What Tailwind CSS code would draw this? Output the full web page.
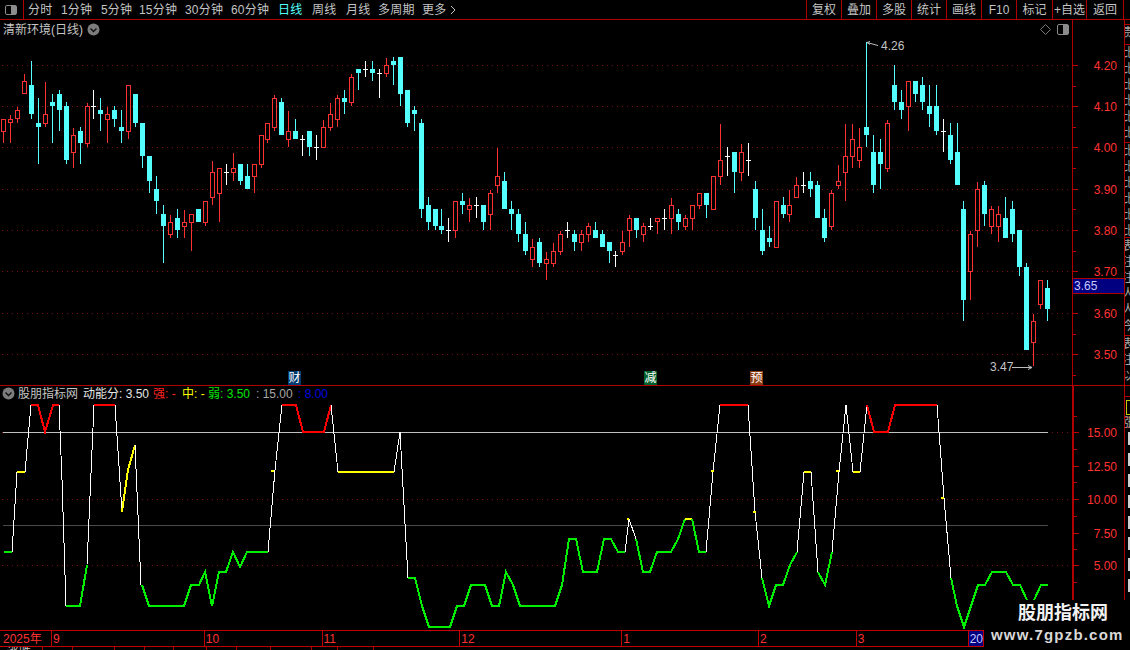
<!DOCTYPE html>
<html lang="zh-CN" class="bg-black">
  <head>
    <meta charset="UTF-8" />
    <title>清新环境 日线</title>
    <script src="https://cdn.jsdelivr.net/npm/@tailwindcss/browser@4"></script>
  </head>
  <body class="bg-black">
    <div class="relative flex flex-col w-[1130px] h-[650px] overflow-hidden bg-black text-[12px] leading-none text-[#c4c4c4] font-['Liberation_Sans','Noto_Sans_CJK_SC',sans-serif]">
      <!-- top toolbar -->
      <header class="flex h-[20px] shrink-0 border-b border-[#b00000]">
        <button class="flex items-center justify-center w-[24px] border-r border-[#b00000]">
          <span class="flex justify-end w-[12px] h-[10px] border border-[#8c8c8c] rounded-[2px] ml-[-1px]"><span class="w-[5px] bg-[#8c8c8c]"></span></span>
        </button>
        <nav class="flex items-center flex-1 pl-[4px] tracking-[0.2px]">
          <span class="w-[33px]">分时</span>
          <span class="w-[40px]">1分钟</span>
          <span class="w-[38px]">5分钟</span>
          <span class="w-[46px]">15分钟</span>
          <span class="w-[46px]">30分钟</span>
          <span class="w-[47px]">60分钟</span>
          <span class="w-[34px] text-[#54ffff]">日线</span>
          <span class="w-[34px]">周线</span>
          <span class="w-[32px]">月线</span>
          <span class="w-[44px]">多周期</span>
          <span class="flex items-center gap-[4px]">更多<svg width="6" height="10" viewBox="0 0 6 10"><path d="M1 1l4 4-4 4" fill="none" stroke="#c4c4c4"/></svg></span>
        </nav>
        <div class="flex items-stretch">
          <span class="flex items-center justify-center w-[35px] border-l border-[#b00000]">复权</span>
          <span class="flex items-center justify-center w-[35px] border-l border-[#b00000]">叠加</span>
          <span class="flex items-center justify-center w-[35px] border-l border-[#b00000]">多股</span>
          <span class="flex items-center justify-center w-[35px] border-l border-[#b00000]">统计</span>
          <span class="flex items-center justify-center w-[35px] border-l border-[#b00000]">画线</span>
          <span class="flex items-center justify-center w-[35px] border-l border-[#b00000]">F10</span>
          <span class="flex items-center justify-center w-[36px] border-l border-[#b00000]">标记</span>
          <span class="flex items-center justify-center w-[34px] border-l border-[#b00000]">+自选</span>
          <span class="flex items-center justify-center w-[37px] border-l border-[#b00000]">返回</span>
          <span class="w-[7px] border-l border-[#b00000]"></span>
        </div>
      </header>

      <!-- price panel -->
      <section class="flex h-[366px] shrink-0 border-b border-[#b00000]">
        <div class="relative w-[1072px]">
          <svg id="price" class="absolute inset-0" width="1072" height="365" viewBox="0 20 1072 365"></svg>
          <div class="relative flex items-center h-[19px] pl-[3px] gap-[4px]">
            <span>清新环境(日线)</span>
            <svg width="13" height="13" viewBox="0 0 13 13"><circle cx="6.5" cy="6.5" r="6" fill="#7d7d7d"/><path d="M3.5 5.5l3 3 3-3" fill="none" stroke="#111" stroke-width="1.4"/></svg>
            <span class="flex items-center gap-[6px] ml-auto mr-[3px]">
              <svg width="11" height="11" viewBox="0 0 11 11"><path d="M5.5.5l5 5-5 5-5-5z" fill="none" stroke="#777"/></svg>
              <span class="flex justify-end w-[12px] h-[11px] border border-[#8c8c8c] rounded-[2px]"><span class="w-[5px] bg-[#8c8c8c]"></span></span>
            </span>
          </div>
          <span class="absolute left-[881px] top-[20px] text-[#c4c4c4]">4.26</span>
          <span class="absolute left-[990px] top-[341px] text-[#c4c4c4]">3.47</span>
          <span class="absolute left-[288px] top-[351px] w-[13px] h-[14px] flex items-center justify-center bg-[#003a6e] text-white">财</span>
          <span class="absolute left-[644px] top-[351px] w-[13px] h-[14px] flex items-center justify-center bg-[#00602a] text-white">减</span>
          <span class="absolute left-[750px] top-[351px] w-[13px] h-[14px] flex items-center justify-center bg-[#8a3a10] text-white">预</span>
        </div>
        <div class="relative w-[52px] border-l border-[#b00000]">
          <svg id="price-axis" class="absolute inset-0" width="51" height="365" viewBox="1073 20 51 365"></svg>
          <div class="absolute left-0 right-0 top-[258px] h-[16px] flex items-center pl-[1px] bg-[#000080] border-y border-[#b00000] text-[#c8c8ff]">3.65</div>
        </div>
        <div class="flex flex-col w-[6px] border-l border-[#b00000] overflow-hidden leading-[16px] text-[#a8a8a8]">
          <div class="h-[5px] border-b border-[#b00000]"></div>
          <div class="h-[20px] border-b border-[#b00000] ml-[-3px] w-[12px]">责</div>
          <div class="h-[98px] border-b border-[#b00000] ml-[-3px] w-[12px]">比<br>比<br>比<br>比<br>比<br>比</div>
          <div class="h-[95px] border-b border-[#b00000] ml-[-3px] w-[12px]">比<br>比<br>比<br>比<br>比<br>比</div>
          <div class="h-[98px] border-b border-[#b00000] ml-[-3px] w-[12px]">表<br>注<br>注<br>人<br>人<br>今</div>
          <div class="h-[49px] ml-[-3px] w-[12px]">表<br>注<br>以</div>
        </div>
      </section>

      <!-- indicator panel -->
      <section class="flex h-[244px] shrink-0">
        <div class="relative w-[1072px]">
          <svg id="ind" class="absolute inset-0" width="1072" height="244" viewBox="0 386 1072 244"></svg>
          <div class="relative flex items-center h-[15px] pl-[2px] gap-[3px] whitespace-nowrap">
            <svg width="13" height="13" viewBox="0 0 13 13"><circle cx="6.5" cy="6.5" r="6" fill="#7d7d7d"/><path d="M3.5 5.5l3 3 3-3" fill="none" stroke="#111" stroke-width="1.4"/></svg>
            <span class="w-[62px]">股朋指标网</span>
            <span class="w-[67px] text-[#e6e6e6]">动能分: 3.50</span>
            <span class="w-[26px] text-[#ff2020]">强: -</span>
            <span class="w-[23px] text-[#ffff00]">中: -</span>
            <span class="w-[45px] text-[#00e600]">弱: 3.50</span>
            <span class="w-[39px] text-[#a8a8a8]">: 15.00</span>
            <span class="text-[#0000e0]">: 8.00</span>
          </div>
        </div>
        <div class="relative w-[52px] border-l-2 border-[#b00000]">
          <svg id="ind-axis" class="absolute inset-0" width="50" height="244" viewBox="1074 386 50 244"></svg>
        </div>
        <div class="flex flex-col w-[6px] border-l border-[#b00000] overflow-hidden leading-[10px] text-[#a8a8a8]">
          <div class="h-[11px] border-b border-[#b00000]"></div>
          <div class="h-[21px] border-b border-[#b00000] pl-[1px]">
            <span class="block w-[8px] h-[15px] mt-[3px] border border-[#c8c800]"></span>
          </div>
          <div class="h-[10px] border-b border-[#b00000] ml-[-3px] w-[12px]">涨</div>
          <div class="flex flex-col gap-[8px] pt-[4px] pl-[3px]">
            <span class="w-[3px] h-[13px] shrink-0 bg-[#cfcfcf]"></span>
            <span class="w-[3px] h-[13px] shrink-0 bg-[#cfcfcf]"></span>
            <span class="w-[3px] h-[13px] shrink-0 bg-[#cfcfcf]"></span>
            <span class="w-[3px] h-[13px] shrink-0 bg-[#cfcfcf]"></span>
            <span class="w-[3px] h-[13px] shrink-0 bg-[#cfcfcf]"></span>
            <span class="w-[3px] h-[13px] shrink-0 bg-[#cfcfcf]"></span>
            <span class="w-[3px] h-[13px] shrink-0 bg-[#cfcfcf]"></span>
            <span class="w-[3px] h-[13px] shrink-0 bg-[#cfcfcf]"></span>
          </div>
        </div>
      </section>

      <!-- time axis -->
      <footer class="relative flex h-[17px] shrink-0 w-[984px] border-y border-[#c00000] text-[#ff3232]">
        <span class="flex items-center w-[51px] pl-[3px]">2025年</span>
        <span class="flex items-center w-[153px] pl-[1px] border-l border-[#c00000]">9</span>
        <span class="flex items-center w-[118px] pl-[1px] border-l border-[#c00000]">10</span>
        <span class="flex items-center w-[138px] pl-[1px] border-l border-[#c00000]">11</span>
        <span class="flex items-center w-[162px] pl-[1px] border-l border-[#c00000]">12</span>
        <span class="flex items-center w-[137px] pl-[1px] border-l border-[#c00000]">1</span>
        <span class="flex items-center w-[98px] pl-[1px] border-l border-[#c00000]">2</span>
        <span class="flex items-center w-[112px] pl-[1px] border-l border-[#c00000]">3</span>
        <span class="flex items-center flex-1 pl-[1px] border-x border-[#c00000] bg-[#000080] text-[#c8c8ff]">20</span>
      </footer>
      <div class="flex h-[3px] w-[984px] text-[#c4c4c4]">
        <span class="w-[43px] pl-[7px] border-r border-[#b00000]">涨跌</span>
        <span class="w-[30px] border-r border-[#b00000]"></span>
        <span class="w-[42px] border-r border-[#b00000]"></span>
        <span class="w-[30px] border-r border-[#b00000]"></span>
        <span class="w-[29px] border-r border-[#b00000]"></span>
        <span class="w-[33px] border-r border-[#b00000]"></span>
        <span class="w-[30px] border-r border-[#b00000]"></span>
        <span class="w-[34px] border-r border-[#b00000]"></span>
        <span class="w-[41px] border-r border-[#b00000]"></span>
        <span class="w-[26px] border-r border-[#b00000]"></span>
        <span class="w-[36px] border-r border-[#b00000]"></span>
      </div>

      <!-- watermark, lies over the chart corner -->
      <div class="absolute right-0 top-[600px] w-[115px] h-[25px] flex items-center pl-[3px] bg-black">
        <span class="text-[18px] font-bold text-[#f2f2f2]">股朋指标网</span>
      </div>
      <div class="absolute right-0 top-[625px] w-[146px] h-[25px] flex items-start pl-[7px] pt-[2px] bg-black">
        <span class="text-[15px] font-bold text-[#d8d8d8] tracking-[1.2px] font-['Liberation_Sans',sans-serif]">www.7gpzb.com</span>
      </div>
    </div>

    <script>
      const NS = "http://www.w3.org/2000/svg";
      const RED = "#ff3232";
      const CYAN = "#54ffff";
      const GRID = "#7a0f0f";

      function add(svg, tag, attrs, text) {
        const el = document.createElementNS(NS, tag);
        for (const k in attrs) el.setAttribute(k, attrs[k]);
        if (text) el.textContent = text;
        svg.appendChild(el);
        return el;
      }

      function hdots(svg, y, x1, x2) {
        add(svg, "line", { x1, y1: y + 0.5, x2, y2: y + 0.5, stroke: GRID, "stroke-dasharray": "1 4" });
      }

      // type, high, body top, body bottom, low, read off the chart per block
      const blocks = [
        { y0: 50, rows: [
          ["r",208,208,245,278],["r",196,208,220,278],["r",170,181,208,218],["r",72,94,133,133],["c",33,105,191,207],
          ["c",144,219,231,342],["r",96,193,221,231],["c",132,156,167,278],["c",120,132,179,242],["c",156,168,330,342],
          ["r",235,256,308,353],["c",232,243,278,342],["r",160,168,281,290],["w",120,169,169,207],["c",144,180,192,242],
          ["r",170,193,209,278],["c",168,180,207,230],["c",180,231,243,278],["r",106,106,245,267],["c",132,132,218,230],
          ["c",219,219,318,353],["c",318,318,392,428],["c",378,417,452,492],["c",465,492,527,638],["r",495,517,554,564],
          ["c",477,504,540,564],["r",480,517,530,564],["r",492,493,518,602],["c",477,477,516,516],["r",454,454,518,528],
          ["r",333,367,443,465],["r",355,355,431,515],
          ["w",342,367,367,405],["r",309,355,369,393],["c",342,342,392,405],["c",342,378,417,417],["r",343,343,380,429],
          ["r",256,256,344,354],["r",220,220,269,279],["r",135,145,233,243],["c",144,156,255,255],["r",183,244,269,291],
          ["c",207,243,267,267],["w",255,268,268,318],["c",243,243,291,318],["w",255,292,292,330],["r",209,232,293,293],
          ["r",159,193,233,243],["r",135,145,209,231],["c",120,144,156,192],["r",72,82,158,168],["c",57,57,69,120],
          ["w",33,58,58,81],["c",33,57,69,93],["w",57,70,70,144],["r",24,46,71,81],["c",21,33,45,105],["c",21,21,132,168],
          ["c",120,120,219,231],["c",168,180,192,243],["c",207,219,477,504],["c",441,465,516,540],["c",477,477,528,540],
        ]},
        { y0: 120, rows: [
          ["c",267,318,330,342],["w",294,330,330,366],["r",243,243,332,354],["c",219,243,255,282],["r",234,256,269,306],
          ["w",231,256,256,294],["c",255,255,306,330],["r",210,220,285,330],["r",84,169,197,219],["c",156,183,267,267],
          ["c",243,267,282,330],["c",267,282,342,366],["c",306,342,392,405],["r",358,381,419,441],["c",354,366,429,441],
          ["r",396,418,431,480],["r",369,394,431,441],["r",333,343,395,405],["w",306,331,331,354],["c",330,342,366,393],
          ["r",330,343,368,393],["r",309,319,344,366],["c",306,330,354,354],["c",330,342,381,381],["c",366,366,393,429],
          ["w",393,406,406,441],["r",333,367,395,405],["r",285,295,332,381],["c",294,294,330,354],["r",309,319,344,366],
          ["w",294,319,319,330],["r",295,295,307,342],
        ]},
        { y0: 110, rows: [
          ["w",297,325,325,360],["r",264,286,326,372],["c",297,312,336,360],["r",315,325,350,360],["r",286,286,326,360],
          ["r",250,250,287,297],["c",249,249,285,324],["r",198,198,299,299],["r",42,151,200,225],["w",111,139,139,198],
          ["c",126,126,186,249],["r",102,127,188,213],["w",99,151,151,198],["c",213,237,324,360],["c",297,360,423,435],
          ["c",348,384,396,411],["r",274,274,413,413],["c",261,285,312,324],["r",240,286,314,336],["r",201,226,263,263],
          ["w",186,226,226,249],["c",186,213,237,261],["c",213,225,324,324],["c",297,324,384,396],["r",240,250,350,360],
          ["r",165,214,228,237],["r",42,139,188,273],["r",42,88,140,174],["r",54,112,152,174],
        ]},
        { y0: 40, rows: [
          ["c",6,261,285,321],["c",285,336,435,459],["c",297,336,372,447],["r",240,250,386,396],["c",75,135,186,210],
          ["c",150,186,210,237],["r",124,124,200,273],["c",123,123,162,186],["c",111,135,186,210],["c",135,198,222,261],
          ["c",135,198,273,285],["w",237,274,274,336],["c",249,285,360,372],["c",249,336,435,435],["c",484,507,780,843],
          ["r",573,583,695,780],["r",426,448,572,621],["c",423,435,522,558],["r",498,508,560,582],["r",498,523,560,606],
          ["c",471,534,594,594],["c",483,507,582,606],["c",570,570,681,708],["c",669,681,930,930],["r",822,844,908,978],
          ["r",720,721,794,807],["c",720,744,807,843],
        ]},
      ];

      const price = document.getElementById("price");
      [65, 106, 147, 189, 230, 271, 313, 354].forEach((y) => hdots(price, y, 2, 1072));

      let i = 0;
      for (const b of blocks) {
        for (const [t, hi, top, bot, lo] of b.rows) {
          const p = Math.floor(3.5 + 6.96 * i);
          const yh = Math.round(b.y0 + hi / 3), yt = Math.round(b.y0 + top / 3);
          const yb = Math.round(b.y0 + bot / 3), yl = Math.round(b.y0 + lo / 3);
          const col = t === "r" ? RED : t === "c" ? CYAN : "#ffffff";
          add(price, "rect", { x: p, y: yh, width: 1, height: Math.max(yl - yh, 1), fill: col });
          if (t === "w") add(price, "rect", { x: p - 2, y: yt, width: 5, height: 1, fill: col });
          else if (t === "c") add(price, "rect", { x: p - 2, y: yt, width: 5, height: Math.max(yb - yt, 1), fill: col });
          else add(price, "rect", { x: p - 1.5, y: yt + 0.5, width: 4, height: Math.max(yb - yt - 1, 1), fill: "#000", stroke: col });
          i++;
        }
      }

      // high and low arrows
      add(price, "path", { d: "M867 42.5l3-1m-3 1l3 2m-3-2l11 3", fill: "none", stroke: "#bdbdbd" });
      add(price, "path", { d: "M1012 367.5h20m-4-2l4 2-4 2", fill: "none", stroke: "#bdbdbd" });

      function axis(id, x, rows, minor) {
        const svg = document.getElementById(id);
        for (const [y, label] of rows) {
          add(svg, "rect", { x, y, width: 5, height: 1, fill: "#c00000" });
          add(svg, "text", { x: 1117, y: y + 5, "text-anchor": "end", fill: RED, "font-size": 12, "font-family": "Liberation Sans" }, label);
        }
        minor.forEach((y) => add(svg, "rect", { x, y, width: 3, height: 1, fill: "#c00000" }));
      }
      axis("price-axis", 1073,
        [[65,"4.20"],[106,"4.10"],[147,"4.00"],[189,"3.90"],[230,"3.80"],[271,"3.70"],[313,"3.60"],[354,"3.50"]],
        [86,127,168,209,251,292,334,375]);
      axis("ind-axis", 1074,
        [[432,"15.00"],[466,"12.50"],[499,"10.00"],[533,"7.50"],[565,"5.00"]],
        [416,449,482,516,549,582]);

      // indicator lines: white for the mid range, colour for the state it sits in
      const ind = document.getElementById("ind");
      [432, 499, 565].forEach((y) => hdots(ind, y, 2, 1072));
      add(ind, "rect", { x: 3, y: 525, width: 1045, height: 1, fill: "#4a4a4a" });
      add(ind, "rect", { x: 3, y: 432, width: 1045, height: 1, fill: "#c0c0c0" });

      const W = "#ffffff", R = "#ff0000", Y = "#ffff00", G = "#00ee00";
      const segs = [
        [G,[[4,552],[12,552]]],[W,[[12,552],[17,472]]],[Y,[[17,472],[25,472]]],[W,[[25,472],[31,405]]],
        [R,[[31,405],[38,405],[45,432],[53,405],[59,405]]],[W,[[59,405],[62,480],[66,606]]],
        [G,[[66,606],[80,606],[87,565]]],[W,[[87,565],[94,405]]],[R,[[94,405],[115,405]]],[W,[[115,405],[122,512]]],
        [Y,[[122,512],[128,470],[135,445]]],[W,[[135,445],[141,585]]],
        [G,[[142,585],[149,606],[184,606],[191,585],[199,585],[205,572],[212,606],[219,572],[226,572],[233,552],[240,567],[247,552],[268,552]]],
        [W,[[268,552],[275,470],[282,405]]],[Y,[[271,471],[274,471]]],
        [R,[[282,405],[296,405],[303,432],[324,432],[331,405]]],[W,[[331,405],[338,472]]],[Y,[[338,472],[394,472]]],
        [W,[[394,472],[400,432],[408,578]]],
        [G,[[408,578],[415,578],[422,606],[429,627],[450,627],[457,606],[464,606],[471,585],[485,585],[492,606],[499,606],[506,572],[513,585],[520,606],[555,606],[562,585],[569,539],[576,539],[583,572],[597,572],[604,539],[611,539],[618,552],[625,552]]],
        [W,[[625,552],[629,519],[636,539]]],[Y,[[627,519],[629,519]]],
        [G,[[636,539],[643,572],[650,572],[657,552],[671,552],[678,539],[685,519]]],[Y,[[685,519],[692,519]]],
        [G,[[692,519],[699,552],[706,552]]],[W,[[706,552],[713,472],[720,405]]],[Y,[[711,471],[714,471]]],
        [R,[[720,405],[748,405]]],[W,[[748,405],[755,512],[762,578]]],[Y,[[753,512],[756,512]]],
        [G,[[762,578],[769,606],[776,585],[783,585],[790,565],[797,552]]],[W,[[797,552],[804,472]]],[Y,[[804,472],[811,472]]],
        [W,[[811,472],[818,572]]],[G,[[818,572],[825,585],[832,552]]],[W,[[832,552],[839,472],[846,405],[853,472]]],
        [Y,[[836,471],[839,471]]],[Y,[[853,472],[860,472]]],[W,[[860,472],[867,405]]],
        [R,[[867,405],[874,432],[888,432],[895,405],[937,405]]],[W,[[937,405],[944,498],[951,578]]],[Y,[[941,498],[944,498]]],
        [G,[[951,578],[957,606],[964,627],[971,606],[978,585],[985,585],[992,572],[1006,572],[1013,585],[1020,585],[1027,600]]],
        [G,[[1034,600],[1041,585],[1048,585]]],
      ];
      for (const [col, pts] of segs) {
        add(ind, "polyline", {
          points: pts.map((q) => q.join(",")).join(" "),
          fill: "none",
          stroke: col,
          "stroke-width": col === W ? 1 : 2,
          "shape-rendering": "crispEdges",
        });
      }
    </script>
  </body>
</html>
